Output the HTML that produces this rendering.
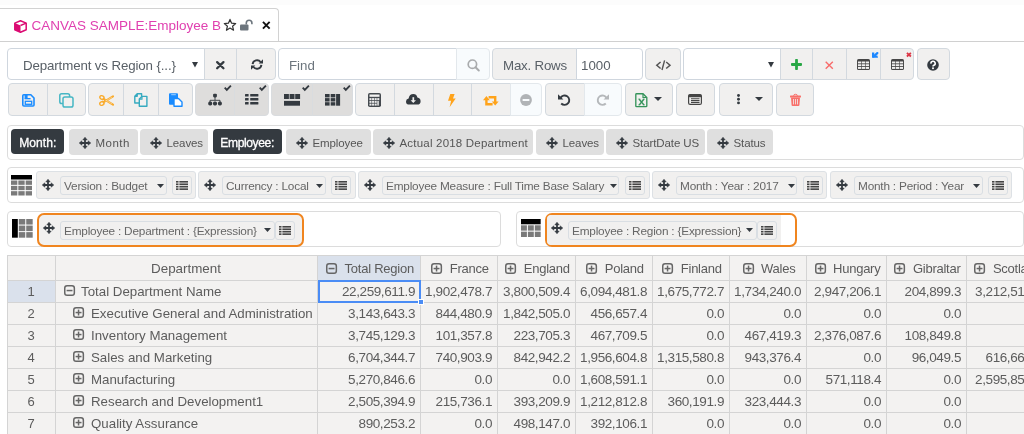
<!DOCTYPE html><html><head><meta charset="utf-8"><style>
*{box-sizing:border-box;margin:0;padding:0}
html,body{width:1024px;height:434px;overflow:hidden;background:#fff;font-family:"Liberation Sans",sans-serif;color:#495057}
.ab{position:absolute}
.btn{position:absolute;background:#f1f0ef;border:1px solid #d3d9df}
.inp{position:absolute;background:#fff;border:1px solid #cfd6de}
.t{position:absolute;white-space:nowrap}
svg{position:absolute;overflow:visible}
.zone{position:absolute;border:1px solid #dcdcdc;border-radius:4px;background:#fff}
.chip{position:absolute;background:#dfdfdf;border-radius:4px;height:26px}
.badge{position:absolute;background:#343a40;border-radius:4px;color:#fff;font-weight:bold}
.fitem{position:absolute;background:#f1f0ef;border:1px solid #dde1e5;border-radius:3px}
.fsel{position:absolute;background:#f1f0ef;border:1px solid #d9dee3;border-radius:3px;height:19px}
.flist{position:absolute;background:#f1f0ef;border:1px solid #d9dee3;border-radius:3px;height:19px;width:20px}
table{position:absolute;border-collapse:collapse;table-layout:fixed}
td{border:1px solid #d6d6d6;height:22px;white-space:nowrap;overflow:hidden;background:#f3f2f1;color:#444}
</style></head><body><div style="position:absolute;left:0;top:0;width:1024px;height:434px;overflow:hidden;will-change:transform">
<div class="ab" style="left:0;top:0;width:1024px;height:5px;background:#fcfcfc"></div>
<div class="ab" style="left:-10px;top:8px;width:289px;height:34px;border:1px solid #d2d2d2;border-bottom:none;border-radius:4px 4px 0 0;background:#fff"></div>
<div class="ab" style="left:0;top:41px;width:1024px;height:1px;background:#d0d0d0"></div>
<div class="t" style="left:31.5px;top:18px;font-size:13.5px;color:#e040b0">CANVAS SAMPLE:Employee B</div>
<div class="inp" style="left:7px;top:48px;width:198px;height:32px;border-radius:4px 0 0 4px"></div>
<div class="t" style="left:23px;top:57.5px;font-size:13.3px;color:#596067;letter-spacing:-0.12px">Department vs Region {...}</div>
<div class="btn" style="left:204px;top:48px;width:33px;height:32px;"></div>
<div class="btn" style="left:236px;top:48px;width:40px;height:32px;border-radius:0 4px 4px 0"></div>
<div class="inp" style="left:278px;top:48px;width:179px;height:32px;border-radius:4px 0 0 4px"></div>
<div class="t" style="left:289px;top:57.5px;font-size:13.3px;color:#6c757d;">Find</div>
<div class="btn" style="left:456px;top:48px;width:34px;height:32px;background:#f8fbfd;border-radius:0 4px 4px 0;border-color:#e3e8ec"></div>
<div class="btn" style="left:492px;top:48px;width:85px;height:32px;border-radius:4px 0 0 4px"></div>
<div class="t" style="left:503px;top:57.5px;font-size:13.3px;color:#596067;letter-spacing:-0.2px">Max. Rows</div>
<div class="inp" style="left:576px;top:48px;width:67px;height:32px;border-radius:0 4px 4px 0"></div>
<div class="t" style="left:581px;top:57.5px;font-size:13.3px;color:#596067;">1000</div>
<div class="btn" style="left:645px;top:48px;width:36px;height:32px;border-radius:4px"></div>
<div class="inp" style="left:683px;top:48px;width:98px;height:32px;border-radius:4px 0 0 4px"></div>
<div class="btn" style="left:780px;top:48px;width:33px;height:32px;"></div>
<div class="btn" style="left:812px;top:48px;width:35px;height:32px;"></div>
<div class="btn" style="left:846px;top:48px;width:35px;height:32px;"></div>
<div class="btn" style="left:880px;top:48px;width:34px;height:32px;border-radius:0 4px 4px 0"></div>
<div class="btn" style="left:917px;top:48px;width:33px;height:32px;border-radius:4px"></div>
<div class="btn" style="left:8px;top:83px;width:40px;height:33px;border-radius:4px 0 0 4px;"></div>
<div class="btn" style="left:47px;top:83px;width:39px;height:33px;border-radius:0 4px 4px 0;"></div>
<div class="btn" style="left:88px;top:83px;width:36px;height:33px;border-radius:4px 0 0 4px;"></div>
<div class="btn" style="left:123px;top:83px;width:36px;height:33px;;"></div>
<div class="btn" style="left:158px;top:83px;width:35px;height:33px;border-radius:0 4px 4px 0;"></div>
<div class="btn" style="left:195px;top:83px;width:40px;height:33px;border-radius:4px 0 0 4px;background:#dedddc;border-color:#d9dcdf"></div>
<div class="btn" style="left:234px;top:83px;width:35px;height:33px;border-radius:0 4px 4px 0;background:#dedddc;border-color:#d9dcdf"></div>
<div class="btn" style="left:271px;top:83px;width:42px;height:33px;border-radius:4px 0 0 4px;background:#dedddc;border-color:#d9dcdf"></div>
<div class="btn" style="left:312px;top:83px;width:41px;height:33px;border-radius:0 4px 4px 0;background:#dedddc;border-color:#d9dcdf"></div>
<div class="btn" style="left:355px;top:83px;width:40px;height:33px;border-radius:4px 0 0 4px;"></div>
<div class="btn" style="left:394px;top:83px;width:40px;height:33px;;"></div>
<div class="btn" style="left:433px;top:83px;width:39px;height:33px;;"></div>
<div class="btn" style="left:471px;top:83px;width:40px;height:33px;;"></div>
<div class="btn" style="left:510px;top:83px;width:32px;height:33px;border-radius:0 4px 4px 0;background:#f8fbfd;border-color:#e3e8ec"></div>
<div class="btn" style="left:545px;top:83px;width:40px;height:33px;border-radius:4px 0 0 4px;"></div>
<div class="btn" style="left:584px;top:83px;width:38px;height:33px;border-radius:0 4px 4px 0;background:#f8fbfd;border-color:#e3e8ec"></div>
<div class="btn" style="left:625px;top:83px;width:48px;height:33px;border-radius:4px;"></div>
<div class="btn" style="left:676px;top:83px;width:39px;height:33px;border-radius:4px;"></div>
<div class="btn" style="left:719px;top:83px;width:54px;height:33px;border-radius:4px;"></div>
<div class="btn" style="left:776px;top:83px;width:38px;height:33px;border-radius:4px;"></div>
<div class="zone" style="left:7px;top:125px;width:1017px;height:35px;"></div>
<div class="badge" style="left:11.3px;top:128.6px;width:52.7px;height:25.6px"></div>
<div class="t" style="left:19.3px;top:136.4px;font-size:12.1px;letter-spacing:0px;color:#fff;-webkit-text-stroke:0.3px #fff">Month:</div>
<div class="chip" style="left:69px;top:129px;width:69px"></div>
<div class="t" style="left:95.5px;top:136.5px;font-size:11.5px;letter-spacing:0.5px;color:#555">Month</div>
<div class="chip" style="left:140px;top:129px;width:68px"></div>
<div class="t" style="left:166.5px;top:136.5px;font-size:11.5px;letter-spacing:-0.1px;color:#555">Leaves</div>
<div class="badge" style="left:213.3px;top:128.6px;width:68.7px;height:25.6px"></div>
<div class="t" style="left:220.3px;top:136.4px;font-size:12.1px;letter-spacing:-0.4px;color:#fff;-webkit-text-stroke:0.3px #fff">Employee:</div>
<div class="chip" style="left:286px;top:129px;width:85px"></div>
<div class="t" style="left:312.5px;top:136.5px;font-size:11.5px;letter-spacing:-0.1px;color:#555">Employee</div>
<div class="chip" style="left:373px;top:129px;width:160px"></div>
<div class="t" style="left:399.5px;top:136.5px;font-size:11.5px;letter-spacing:0.2px;color:#555">Actual 2018 Department</div>
<div class="chip" style="left:536px;top:129px;width:68px"></div>
<div class="t" style="left:562.5px;top:136.5px;font-size:11.5px;letter-spacing:-0.1px;color:#555">Leaves</div>
<div class="chip" style="left:606px;top:129px;width:99px"></div>
<div class="t" style="left:632.5px;top:136.5px;font-size:11.5px;letter-spacing:-0.1px;color:#555">StartDate US</div>
<div class="chip" style="left:707px;top:129px;width:66px"></div>
<div class="t" style="left:733.5px;top:136.5px;font-size:11.5px;letter-spacing:-0.1px;color:#555">Status</div>
<div class="zone" style="left:7px;top:167px;width:1017px;height:36px;"></div>
<div class="fitem" style="left:36px;top:171px;width:160px;height:28px;"></div>
<div class="fsel" style="left:60px;top:176px;width:107px"></div>
<div class="t" style="left:64px;top:179.2px;font-size:11.8px;letter-spacing:-0.2px;color:#666">Version : Budget</div>
<div class="flist" style="left:172px;top:176px"></div>
<div class="fitem" style="left:198px;top:171px;width:158px;height:28px;"></div>
<div class="fsel" style="left:222px;top:176px;width:104px"></div>
<div class="t" style="left:226px;top:179.2px;font-size:11.8px;letter-spacing:-0.2px;color:#666">Currency : Local</div>
<div class="flist" style="left:331px;top:176px"></div>
<div class="fitem" style="left:358px;top:171px;width:292px;height:28px;"></div>
<div class="fsel" style="left:382px;top:176px;width:237px"></div>
<div class="t" style="left:386px;top:179.2px;font-size:11.8px;letter-spacing:-0.2px;color:#666">Employee Measure : Full Time Base Salary</div>
<div class="flist" style="left:625px;top:176px"></div>
<div class="fitem" style="left:652px;top:171px;width:175px;height:28px;"></div>
<div class="fsel" style="left:676px;top:176px;width:121px"></div>
<div class="t" style="left:680px;top:179.2px;font-size:11.8px;letter-spacing:-0.2px;color:#666">Month : Year : 2017</div>
<div class="flist" style="left:803px;top:176px"></div>
<div class="fitem" style="left:830px;top:171px;width:182px;height:28px;"></div>
<div class="fsel" style="left:854px;top:176px;width:129px"></div>
<div class="t" style="left:858px;top:179.2px;font-size:11.8px;letter-spacing:-0.2px;color:#666">Month : Period : Year</div>
<div class="flist" style="left:988px;top:176px"></div>
<div class="zone" style="left:7px;top:211px;width:494px;height:36px;"></div>
<div class="zone" style="left:516px;top:211px;width:508px;height:36px;"></div>
<div class="ab" style="left:37px;top:213px;width:267px;height:34px;border:2px solid #f0851f;border-radius:7px;background:#f1f0ef"></div>
<div class="fsel" style="left:60px;top:221px;width:215px"></div>
<div class="t" style="left:64px;top:223.6px;font-size:11.8px;letter-spacing:-0.2px;color:#666">Employee : Department : {Expression}</div>
<div class="flist" style="left:275px;top:221px"></div>
<div class="ab" style="left:545px;top:213px;width:252px;height:34px;border:2px solid #f0851f;border-radius:7px;background:#fff"></div>
<div class="ab" style="left:547px;top:215px;width:234px;height:30px;background:#f1f0ef;border-radius:4px 0 0 4px"></div>
<div class="fsel" style="left:568px;top:221px;width:189px"></div>
<div class="t" style="left:572px;top:223.6px;font-size:11.8px;letter-spacing:-0.2px;color:#666">Employee : Region : {Expression}</div>
<div class="flist" style="left:757px;top:221px"></div>
<div class="ab" style="left:7px;top:255px;width:1017px;height:179px;background:#f3f2f1"></div>
<div class="ab" style="left:7px;top:280px;width:48px;height:22px;background:#dae1ec"></div>
<div class="ab" style="left:317px;top:255px;width:103px;height:25px;background:#dae1ec"></div>
<div class="ab" style="left:7px;top:255px;width:1017px;height:1px;background:#d4d4d4"></div>
<div class="ab" style="left:7px;top:280px;width:1017px;height:1px;background:#d4d4d4"></div>
<div class="ab" style="left:7px;top:302px;width:1017px;height:1px;background:#d4d4d4"></div>
<div class="ab" style="left:7px;top:324px;width:1017px;height:1px;background:#d4d4d4"></div>
<div class="ab" style="left:7px;top:346px;width:1017px;height:1px;background:#d4d4d4"></div>
<div class="ab" style="left:7px;top:368px;width:1017px;height:1px;background:#d4d4d4"></div>
<div class="ab" style="left:7px;top:390px;width:1017px;height:1px;background:#d4d4d4"></div>
<div class="ab" style="left:7px;top:412px;width:1017px;height:1px;background:#d4d4d4"></div>
<div class="ab" style="left:7px;top:434px;width:1017px;height:1px;background:#d4d4d4"></div>
<div class="ab" style="left:7px;top:255px;width:1px;height:179px;background:#d4d4d4"></div>
<div class="ab" style="left:55px;top:255px;width:1px;height:179px;background:#d4d4d4"></div>
<div class="ab" style="left:317px;top:255px;width:1px;height:179px;background:#d4d4d4"></div>
<div class="ab" style="left:420px;top:255px;width:1px;height:179px;background:#d4d4d4"></div>
<div class="ab" style="left:497px;top:255px;width:1px;height:179px;background:#d4d4d4"></div>
<div class="ab" style="left:575px;top:255px;width:1px;height:179px;background:#d4d4d4"></div>
<div class="ab" style="left:652px;top:255px;width:1px;height:179px;background:#d4d4d4"></div>
<div class="ab" style="left:729px;top:255px;width:1px;height:179px;background:#d4d4d4"></div>
<div class="ab" style="left:806px;top:255px;width:1px;height:179px;background:#d4d4d4"></div>
<div class="ab" style="left:886px;top:255px;width:1px;height:179px;background:#d4d4d4"></div>
<div class="ab" style="left:966px;top:255px;width:1px;height:179px;background:#d4d4d4"></div>
<div class="t" style="left:55px;top:261px;width:262px;text-align:center;font-size:13.4px;letter-spacing:0px;color:#5c5c5c">Department</div>
<div class="t" style="left:317px;top:261px;width:103px;text-align:center;padding-left:3px;font-size:13px;letter-spacing:-0.25px;color:#5c5c5c"><span style="display:inline-block;width:11px;height:11px;margin-right:7.5px;vertical-align:-1px;position:relative"><svg style="left:0;top:0" width="11" height="11" viewBox="0 0 11 11"><rect x="0.75" y="0.75" width="9.6" height="9.6" rx="2.3" fill="none" stroke="#666" stroke-width="1.5"/><path d="M2.6 5.55 H8.5" stroke="#666" stroke-width="1.5"/></svg></span>Total Region</div>
<div class="t" style="left:420px;top:261px;width:77px;text-align:center;padding-left:3px;font-size:13px;letter-spacing:-0.25px;color:#5c5c5c"><span style="display:inline-block;width:11px;height:11px;margin-right:7.5px;vertical-align:-1px;position:relative"><svg style="left:0;top:0" width="11" height="11" viewBox="0 0 11 11"><rect x="0.75" y="0.75" width="9.6" height="9.6" rx="2.3" fill="none" stroke="#666" stroke-width="1.5"/><path d="M2.6 5.55 H8.5" stroke="#666" stroke-width="1.5"/><path d="M5.55 2.6 V8.5" stroke="#666" stroke-width="1.5"/></svg></span>France</div>
<div class="t" style="left:497px;top:261px;width:78px;text-align:center;padding-left:3px;font-size:13px;letter-spacing:-0.25px;color:#5c5c5c"><span style="display:inline-block;width:11px;height:11px;margin-right:7.5px;vertical-align:-1px;position:relative"><svg style="left:0;top:0" width="11" height="11" viewBox="0 0 11 11"><rect x="0.75" y="0.75" width="9.6" height="9.6" rx="2.3" fill="none" stroke="#666" stroke-width="1.5"/><path d="M2.6 5.55 H8.5" stroke="#666" stroke-width="1.5"/><path d="M5.55 2.6 V8.5" stroke="#666" stroke-width="1.5"/></svg></span>England</div>
<div class="t" style="left:575px;top:261px;width:77px;text-align:center;padding-left:3px;font-size:13px;letter-spacing:-0.25px;color:#5c5c5c"><span style="display:inline-block;width:11px;height:11px;margin-right:7.5px;vertical-align:-1px;position:relative"><svg style="left:0;top:0" width="11" height="11" viewBox="0 0 11 11"><rect x="0.75" y="0.75" width="9.6" height="9.6" rx="2.3" fill="none" stroke="#666" stroke-width="1.5"/><path d="M2.6 5.55 H8.5" stroke="#666" stroke-width="1.5"/><path d="M5.55 2.6 V8.5" stroke="#666" stroke-width="1.5"/></svg></span>Poland</div>
<div class="t" style="left:652px;top:261px;width:77px;text-align:center;padding-left:3px;font-size:13px;letter-spacing:-0.25px;color:#5c5c5c"><span style="display:inline-block;width:11px;height:11px;margin-right:7.5px;vertical-align:-1px;position:relative"><svg style="left:0;top:0" width="11" height="11" viewBox="0 0 11 11"><rect x="0.75" y="0.75" width="9.6" height="9.6" rx="2.3" fill="none" stroke="#666" stroke-width="1.5"/><path d="M2.6 5.55 H8.5" stroke="#666" stroke-width="1.5"/><path d="M5.55 2.6 V8.5" stroke="#666" stroke-width="1.5"/></svg></span>Finland</div>
<div class="t" style="left:729px;top:261px;width:77px;text-align:center;padding-left:3px;font-size:13px;letter-spacing:-0.25px;color:#5c5c5c"><span style="display:inline-block;width:11px;height:11px;margin-right:7.5px;vertical-align:-1px;position:relative"><svg style="left:0;top:0" width="11" height="11" viewBox="0 0 11 11"><rect x="0.75" y="0.75" width="9.6" height="9.6" rx="2.3" fill="none" stroke="#666" stroke-width="1.5"/><path d="M2.6 5.55 H8.5" stroke="#666" stroke-width="1.5"/><path d="M5.55 2.6 V8.5" stroke="#666" stroke-width="1.5"/></svg></span>Wales</div>
<div class="t" style="left:806px;top:261px;width:80px;text-align:center;padding-left:3px;font-size:13px;letter-spacing:-0.25px;color:#5c5c5c"><span style="display:inline-block;width:11px;height:11px;margin-right:7.5px;vertical-align:-1px;position:relative"><svg style="left:0;top:0" width="11" height="11" viewBox="0 0 11 11"><rect x="0.75" y="0.75" width="9.6" height="9.6" rx="2.3" fill="none" stroke="#666" stroke-width="1.5"/><path d="M2.6 5.55 H8.5" stroke="#666" stroke-width="1.5"/><path d="M5.55 2.6 V8.5" stroke="#666" stroke-width="1.5"/></svg></span>Hungary</div>
<div class="t" style="left:886px;top:261px;width:80px;text-align:center;padding-left:3px;font-size:13px;letter-spacing:-0.25px;color:#5c5c5c"><span style="display:inline-block;width:11px;height:11px;margin-right:7.5px;vertical-align:-1px;position:relative"><svg style="left:0;top:0" width="11" height="11" viewBox="0 0 11 11"><rect x="0.75" y="0.75" width="9.6" height="9.6" rx="2.3" fill="none" stroke="#666" stroke-width="1.5"/><path d="M2.6 5.55 H8.5" stroke="#666" stroke-width="1.5"/><path d="M5.55 2.6 V8.5" stroke="#666" stroke-width="1.5"/></svg></span>Gibraltar</div>
<div class="t" style="left:966px;top:261px;width:81px;text-align:center;padding-left:3px;font-size:13px;letter-spacing:-0.25px;color:#5c5c5c"><span style="display:inline-block;width:11px;height:11px;margin-right:7.5px;vertical-align:-1px;position:relative"><svg style="left:0;top:0" width="11" height="11" viewBox="0 0 11 11"><rect x="0.75" y="0.75" width="9.6" height="9.6" rx="2.3" fill="none" stroke="#666" stroke-width="1.5"/><path d="M2.6 5.55 H8.5" stroke="#666" stroke-width="1.5"/><path d="M5.55 2.6 V8.5" stroke="#666" stroke-width="1.5"/></svg></span>Scotland</div>
<div class="t" style="left:7px;top:284px;width:48px;text-align:center;font-size:13px;letter-spacing:0px;color:#5c5c5c">1</div>
<svg style="left:63.6px;top:284.8px" width="11" height="11" viewBox="0 0 11 11"><rect x="0.75" y="0.75" width="9.6" height="9.6" rx="2.3" fill="none" stroke="#666" stroke-width="1.5"/><path d="M2.6 5.55 H8.5" stroke="#666" stroke-width="1.5"/></svg>
<div class="t" style="left:81px;top:284px;font-size:13.3px;letter-spacing:0px;color:#5c5c5c">Total Department Name</div>
<div class="t" style="left:317px;top:284px;width:98px;text-align:right;font-size:13.5px;letter-spacing:-0.4px;color:#5c5c5c;overflow:visible">22,259,611.9</div>
<div class="t" style="left:420px;top:284px;width:72px;text-align:right;font-size:13.5px;letter-spacing:-0.4px;color:#5c5c5c;overflow:visible">1,902,478.7</div>
<div class="t" style="left:497px;top:284px;width:73px;text-align:right;font-size:13.5px;letter-spacing:-0.4px;color:#5c5c5c;overflow:visible">3,800,509.4</div>
<div class="t" style="left:575px;top:284px;width:72px;text-align:right;font-size:13.5px;letter-spacing:-0.4px;color:#5c5c5c;overflow:visible">6,094,481.8</div>
<div class="t" style="left:652px;top:284px;width:72px;text-align:right;font-size:13.5px;letter-spacing:-0.4px;color:#5c5c5c;overflow:visible">1,675,772.7</div>
<div class="t" style="left:729px;top:284px;width:72px;text-align:right;font-size:13.5px;letter-spacing:-0.4px;color:#5c5c5c;overflow:visible">1,734,240.0</div>
<div class="t" style="left:806px;top:284px;width:75px;text-align:right;font-size:13.5px;letter-spacing:-0.4px;color:#5c5c5c;overflow:visible">2,947,206.1</div>
<div class="t" style="left:886px;top:284px;width:75px;text-align:right;font-size:13.5px;letter-spacing:-0.4px;color:#5c5c5c;overflow:visible">204,899.3</div>
<div class="t" style="left:966px;top:284px;width:76px;text-align:right;font-size:13.5px;letter-spacing:-0.4px;color:#5c5c5c;overflow:visible">3,212,515.2</div>
<div class="t" style="left:7px;top:306px;width:48px;text-align:center;font-size:13px;letter-spacing:0px;color:#5c5c5c">2</div>
<svg style="left:73.0px;top:306.8px" width="11" height="11" viewBox="0 0 11 11"><rect x="0.75" y="0.75" width="9.6" height="9.6" rx="2.3" fill="none" stroke="#666" stroke-width="1.5"/><path d="M2.6 5.55 H8.5" stroke="#666" stroke-width="1.5"/><path d="M5.55 2.6 V8.5" stroke="#666" stroke-width="1.5"/></svg>
<div class="t" style="left:91px;top:306px;font-size:13.3px;letter-spacing:0px;color:#5c5c5c">Executive General and Administration</div>
<div class="t" style="left:317px;top:306px;width:98px;text-align:right;font-size:13.5px;letter-spacing:-0.4px;color:#5c5c5c;overflow:visible">3,143,643.3</div>
<div class="t" style="left:420px;top:306px;width:72px;text-align:right;font-size:13.5px;letter-spacing:-0.4px;color:#5c5c5c;overflow:visible">844,480.9</div>
<div class="t" style="left:497px;top:306px;width:73px;text-align:right;font-size:13.5px;letter-spacing:-0.4px;color:#5c5c5c;overflow:visible">1,842,505.0</div>
<div class="t" style="left:575px;top:306px;width:72px;text-align:right;font-size:13.5px;letter-spacing:-0.4px;color:#5c5c5c;overflow:visible">456,657.4</div>
<div class="t" style="left:652px;top:306px;width:72px;text-align:right;font-size:13.5px;letter-spacing:-0.4px;color:#5c5c5c;overflow:visible">0.0</div>
<div class="t" style="left:729px;top:306px;width:72px;text-align:right;font-size:13.5px;letter-spacing:-0.4px;color:#5c5c5c;overflow:visible">0.0</div>
<div class="t" style="left:806px;top:306px;width:75px;text-align:right;font-size:13.5px;letter-spacing:-0.4px;color:#5c5c5c;overflow:visible">0.0</div>
<div class="t" style="left:886px;top:306px;width:75px;text-align:right;font-size:13.5px;letter-spacing:-0.4px;color:#5c5c5c;overflow:visible">0.0</div>
<div class="t" style="left:966px;top:306px;width:76px;text-align:right;font-size:13.5px;letter-spacing:-0.4px;color:#5c5c5c;overflow:visible">0.0</div>
<div class="t" style="left:7px;top:328px;width:48px;text-align:center;font-size:13px;letter-spacing:0px;color:#5c5c5c">3</div>
<svg style="left:73.0px;top:328.8px" width="11" height="11" viewBox="0 0 11 11"><rect x="0.75" y="0.75" width="9.6" height="9.6" rx="2.3" fill="none" stroke="#666" stroke-width="1.5"/><path d="M2.6 5.55 H8.5" stroke="#666" stroke-width="1.5"/><path d="M5.55 2.6 V8.5" stroke="#666" stroke-width="1.5"/></svg>
<div class="t" style="left:91px;top:328px;font-size:13.3px;letter-spacing:0px;color:#5c5c5c">Inventory Management</div>
<div class="t" style="left:317px;top:328px;width:98px;text-align:right;font-size:13.5px;letter-spacing:-0.4px;color:#5c5c5c;overflow:visible">3,745,129.3</div>
<div class="t" style="left:420px;top:328px;width:72px;text-align:right;font-size:13.5px;letter-spacing:-0.4px;color:#5c5c5c;overflow:visible">101,357.8</div>
<div class="t" style="left:497px;top:328px;width:73px;text-align:right;font-size:13.5px;letter-spacing:-0.4px;color:#5c5c5c;overflow:visible">223,705.3</div>
<div class="t" style="left:575px;top:328px;width:72px;text-align:right;font-size:13.5px;letter-spacing:-0.4px;color:#5c5c5c;overflow:visible">467,709.5</div>
<div class="t" style="left:652px;top:328px;width:72px;text-align:right;font-size:13.5px;letter-spacing:-0.4px;color:#5c5c5c;overflow:visible">0.0</div>
<div class="t" style="left:729px;top:328px;width:72px;text-align:right;font-size:13.5px;letter-spacing:-0.4px;color:#5c5c5c;overflow:visible">467,419.3</div>
<div class="t" style="left:806px;top:328px;width:75px;text-align:right;font-size:13.5px;letter-spacing:-0.4px;color:#5c5c5c;overflow:visible">2,376,087.6</div>
<div class="t" style="left:886px;top:328px;width:75px;text-align:right;font-size:13.5px;letter-spacing:-0.4px;color:#5c5c5c;overflow:visible">108,849.8</div>
<div class="t" style="left:966px;top:328px;width:76px;text-align:right;font-size:13.5px;letter-spacing:-0.4px;color:#5c5c5c;overflow:visible">0.0</div>
<div class="t" style="left:7px;top:350px;width:48px;text-align:center;font-size:13px;letter-spacing:0px;color:#5c5c5c">4</div>
<svg style="left:73.0px;top:350.8px" width="11" height="11" viewBox="0 0 11 11"><rect x="0.75" y="0.75" width="9.6" height="9.6" rx="2.3" fill="none" stroke="#666" stroke-width="1.5"/><path d="M2.6 5.55 H8.5" stroke="#666" stroke-width="1.5"/><path d="M5.55 2.6 V8.5" stroke="#666" stroke-width="1.5"/></svg>
<div class="t" style="left:91px;top:350px;font-size:13.3px;letter-spacing:0px;color:#5c5c5c">Sales and Marketing</div>
<div class="t" style="left:317px;top:350px;width:98px;text-align:right;font-size:13.5px;letter-spacing:-0.4px;color:#5c5c5c;overflow:visible">6,704,344.7</div>
<div class="t" style="left:420px;top:350px;width:72px;text-align:right;font-size:13.5px;letter-spacing:-0.4px;color:#5c5c5c;overflow:visible">740,903.9</div>
<div class="t" style="left:497px;top:350px;width:73px;text-align:right;font-size:13.5px;letter-spacing:-0.4px;color:#5c5c5c;overflow:visible">842,942.2</div>
<div class="t" style="left:575px;top:350px;width:72px;text-align:right;font-size:13.5px;letter-spacing:-0.4px;color:#5c5c5c;overflow:visible">1,956,604.8</div>
<div class="t" style="left:652px;top:350px;width:72px;text-align:right;font-size:13.5px;letter-spacing:-0.4px;color:#5c5c5c;overflow:visible">1,315,580.8</div>
<div class="t" style="left:729px;top:350px;width:72px;text-align:right;font-size:13.5px;letter-spacing:-0.4px;color:#5c5c5c;overflow:visible">943,376.4</div>
<div class="t" style="left:806px;top:350px;width:75px;text-align:right;font-size:13.5px;letter-spacing:-0.4px;color:#5c5c5c;overflow:visible">0.0</div>
<div class="t" style="left:886px;top:350px;width:75px;text-align:right;font-size:13.5px;letter-spacing:-0.4px;color:#5c5c5c;overflow:visible">96,049.5</div>
<div class="t" style="left:966px;top:350px;width:76px;text-align:right;font-size:13.5px;letter-spacing:-0.4px;color:#5c5c5c;overflow:visible">616,663.2</div>
<div class="t" style="left:7px;top:372px;width:48px;text-align:center;font-size:13px;letter-spacing:0px;color:#5c5c5c">5</div>
<svg style="left:73.0px;top:372.8px" width="11" height="11" viewBox="0 0 11 11"><rect x="0.75" y="0.75" width="9.6" height="9.6" rx="2.3" fill="none" stroke="#666" stroke-width="1.5"/><path d="M2.6 5.55 H8.5" stroke="#666" stroke-width="1.5"/><path d="M5.55 2.6 V8.5" stroke="#666" stroke-width="1.5"/></svg>
<div class="t" style="left:91px;top:372px;font-size:13.3px;letter-spacing:0px;color:#5c5c5c">Manufacturing</div>
<div class="t" style="left:317px;top:372px;width:98px;text-align:right;font-size:13.5px;letter-spacing:-0.4px;color:#5c5c5c;overflow:visible">5,270,846.6</div>
<div class="t" style="left:420px;top:372px;width:72px;text-align:right;font-size:13.5px;letter-spacing:-0.4px;color:#5c5c5c;overflow:visible">0.0</div>
<div class="t" style="left:497px;top:372px;width:73px;text-align:right;font-size:13.5px;letter-spacing:-0.4px;color:#5c5c5c;overflow:visible">0.0</div>
<div class="t" style="left:575px;top:372px;width:72px;text-align:right;font-size:13.5px;letter-spacing:-0.4px;color:#5c5c5c;overflow:visible">1,608,591.1</div>
<div class="t" style="left:652px;top:372px;width:72px;text-align:right;font-size:13.5px;letter-spacing:-0.4px;color:#5c5c5c;overflow:visible">0.0</div>
<div class="t" style="left:729px;top:372px;width:72px;text-align:right;font-size:13.5px;letter-spacing:-0.4px;color:#5c5c5c;overflow:visible">0.0</div>
<div class="t" style="left:806px;top:372px;width:75px;text-align:right;font-size:13.5px;letter-spacing:-0.4px;color:#5c5c5c;overflow:visible">571,118.4</div>
<div class="t" style="left:886px;top:372px;width:75px;text-align:right;font-size:13.5px;letter-spacing:-0.4px;color:#5c5c5c;overflow:visible">0.0</div>
<div class="t" style="left:966px;top:372px;width:76px;text-align:right;font-size:13.5px;letter-spacing:-0.4px;color:#5c5c5c;overflow:visible">2,595,855.1</div>
<div class="t" style="left:7px;top:394px;width:48px;text-align:center;font-size:13px;letter-spacing:0px;color:#5c5c5c">6</div>
<svg style="left:73.0px;top:394.8px" width="11" height="11" viewBox="0 0 11 11"><rect x="0.75" y="0.75" width="9.6" height="9.6" rx="2.3" fill="none" stroke="#666" stroke-width="1.5"/><path d="M2.6 5.55 H8.5" stroke="#666" stroke-width="1.5"/><path d="M5.55 2.6 V8.5" stroke="#666" stroke-width="1.5"/></svg>
<div class="t" style="left:91px;top:394px;font-size:13.3px;letter-spacing:0px;color:#5c5c5c">Research and Development1</div>
<div class="t" style="left:317px;top:394px;width:98px;text-align:right;font-size:13.5px;letter-spacing:-0.4px;color:#5c5c5c;overflow:visible">2,505,394.9</div>
<div class="t" style="left:420px;top:394px;width:72px;text-align:right;font-size:13.5px;letter-spacing:-0.4px;color:#5c5c5c;overflow:visible">215,736.1</div>
<div class="t" style="left:497px;top:394px;width:73px;text-align:right;font-size:13.5px;letter-spacing:-0.4px;color:#5c5c5c;overflow:visible">393,209.9</div>
<div class="t" style="left:575px;top:394px;width:72px;text-align:right;font-size:13.5px;letter-spacing:-0.4px;color:#5c5c5c;overflow:visible">1,212,812.8</div>
<div class="t" style="left:652px;top:394px;width:72px;text-align:right;font-size:13.5px;letter-spacing:-0.4px;color:#5c5c5c;overflow:visible">360,191.9</div>
<div class="t" style="left:729px;top:394px;width:72px;text-align:right;font-size:13.5px;letter-spacing:-0.4px;color:#5c5c5c;overflow:visible">323,444.3</div>
<div class="t" style="left:806px;top:394px;width:75px;text-align:right;font-size:13.5px;letter-spacing:-0.4px;color:#5c5c5c;overflow:visible">0.0</div>
<div class="t" style="left:886px;top:394px;width:75px;text-align:right;font-size:13.5px;letter-spacing:-0.4px;color:#5c5c5c;overflow:visible">0.0</div>
<div class="t" style="left:966px;top:394px;width:76px;text-align:right;font-size:13.5px;letter-spacing:-0.4px;color:#5c5c5c;overflow:visible">0.0</div>
<div class="t" style="left:7px;top:416px;width:48px;text-align:center;font-size:13px;letter-spacing:0px;color:#5c5c5c">7</div>
<svg style="left:73.0px;top:416.8px" width="11" height="11" viewBox="0 0 11 11"><rect x="0.75" y="0.75" width="9.6" height="9.6" rx="2.3" fill="none" stroke="#666" stroke-width="1.5"/><path d="M2.6 5.55 H8.5" stroke="#666" stroke-width="1.5"/><path d="M5.55 2.6 V8.5" stroke="#666" stroke-width="1.5"/></svg>
<div class="t" style="left:91px;top:416px;font-size:13.3px;letter-spacing:0px;color:#5c5c5c">Quality Assurance</div>
<div class="t" style="left:317px;top:416px;width:98px;text-align:right;font-size:13.5px;letter-spacing:-0.4px;color:#5c5c5c;overflow:visible">890,253.2</div>
<div class="t" style="left:420px;top:416px;width:72px;text-align:right;font-size:13.5px;letter-spacing:-0.4px;color:#5c5c5c;overflow:visible">0.0</div>
<div class="t" style="left:497px;top:416px;width:73px;text-align:right;font-size:13.5px;letter-spacing:-0.4px;color:#5c5c5c;overflow:visible">498,147.0</div>
<div class="t" style="left:575px;top:416px;width:72px;text-align:right;font-size:13.5px;letter-spacing:-0.4px;color:#5c5c5c;overflow:visible">392,106.1</div>
<div class="t" style="left:652px;top:416px;width:72px;text-align:right;font-size:13.5px;letter-spacing:-0.4px;color:#5c5c5c;overflow:visible">0.0</div>
<div class="t" style="left:729px;top:416px;width:72px;text-align:right;font-size:13.5px;letter-spacing:-0.4px;color:#5c5c5c;overflow:visible">0.0</div>
<div class="t" style="left:806px;top:416px;width:75px;text-align:right;font-size:13.5px;letter-spacing:-0.4px;color:#5c5c5c;overflow:visible">0.0</div>
<div class="t" style="left:886px;top:416px;width:75px;text-align:right;font-size:13.5px;letter-spacing:-0.4px;color:#5c5c5c;overflow:visible">0.0</div>
<div class="t" style="left:966px;top:416px;width:76px;text-align:right;font-size:13.5px;letter-spacing:-0.4px;color:#5c5c5c;overflow:visible">0.0</div>
<div class="ab" style="left:318px;top:280px;width:103px;height:23px;border:2px solid #4a8cf5"></div>
<div class="ab" style="left:417.5px;top:299px;width:6px;height:6px;background:#4a8cf5;border:1px solid #fff"></div>
<svg style="left:14px;top:19.5px" width="13" height="13" viewBox="0 0 13 13"><path d="M6.5 0.8 L12.2 3.1 V9.8 L6.5 12.3 L0.8 9.8 V3.1 Z" fill="none" stroke="#db0a72" stroke-width="1.5" stroke-linejoin="round"/><path d="M0.8 3.1 L6.5 5.5 V12.3 L0.8 9.8 Z" fill="#db0a72"/><path d="M6.5 5.5 L12.2 3.1" stroke="#db0a72" stroke-width="1.4"/></svg>
<svg style="left:224px;top:19px" width="12" height="12" viewBox="0 0 12 12"><polygon points="6.00,0.40 7.59,4.22 11.71,4.55 8.57,7.23 9.53,11.25 6.00,9.10 2.47,11.25 3.43,7.23 0.29,4.55 4.41,4.22" fill="none" stroke="#333" stroke-width="1.2" stroke-linejoin="round"/></svg>
<svg style="left:240px;top:19.5px" width="13" height="11" viewBox="0 0 13 11"><rect x="0" y="4.5" width="8.5" height="6" rx="1" fill="#6c757d"/><path d="M6.3 4.6 V3 A2.8 2.8 0 0 1 11.9 3 V4.2" fill="none" stroke="#6c757d" stroke-width="1.6"/></svg>
<svg style="left:262px;top:21.2px" width="8.6" height="8.6" viewBox="0 0 8.6 8.6"><path d="M0.95 0.95 L7.6499999999999995 7.6499999999999995 M7.6499999999999995 0.95 L0.95 7.6499999999999995" stroke="#111" stroke-width="1.9" stroke-linecap="butt"/></svg>
<svg style="left:192px;top:61.8px" width="6" height="5.4" viewBox="0 0 6 5.4"><polygon points="0,0 6,0 3.0,5.4" fill="#343a40"/></svg>
<svg style="left:216.3px;top:61px" width="8.6" height="8.4" viewBox="0 0 8.6 8.4"><path d="M1.15 1.15 L7.449999999999999 7.25 M7.449999999999999 1.15 L1.15 7.25" stroke="#343a40" stroke-width="2.3" stroke-linecap="round"/></svg>
<svg style="left:250.7px;top:59px" width="12" height="11" viewBox="0 0 12 11"><path d="M1.6 5.2 A4.5 4.5 0 0 1 9.6 3" fill="none" stroke="#343a40" stroke-width="1.9"/><polygon points="12,0.3 12,4.6 7.7,4.6" fill="#343a40"/><path d="M10.4 5.8 A4.5 4.5 0 0 1 2.4 8" fill="none" stroke="#343a40" stroke-width="1.9"/><polygon points="0,10.7 0,6.4 4.3,6.4" fill="#343a40"/></svg>
<svg style="left:467px;top:58.8px" width="13" height="13" viewBox="0 0 13 13"><circle cx="5.4" cy="5.2" r="4.2" fill="none" stroke="#a9abad" stroke-width="1.7"/><path d="M8.5 8.3 L11.8 11.5" stroke="#a9abad" stroke-width="2" stroke-linecap="round"/></svg>
<svg style="left:656px;top:60px" width="15" height="11" viewBox="0 0 15 11"><path d="M4.6 2 L0.8 5.2 L4.6 8.5 M10.2 2 L14 5.2 L10.2 8.5" fill="none" stroke="#555" stroke-width="1.5"/><path d="M8.6 0.4 L6 10" stroke="#555" stroke-width="1.4"/></svg>
<svg style="left:767.5px;top:61.8px" width="6" height="5.4" viewBox="0 0 6 5.4"><polygon points="0,0 6,0 3.0,5.4" fill="#343a40"/></svg>
<svg style="left:790.5px;top:58.8px" width="11" height="11" viewBox="0 0 11 11"><rect x="0" y="4.1" width="11" height="2.8" rx="0.8" fill="#28a745"/><rect x="4.1" y="0" width="2.8" height="11" rx="0.8" fill="#28a745"/></svg>
<svg style="left:825px;top:60.7px" width="8.5" height="8.5" viewBox="0 0 8.5 8.5"><path d="M0.7 0.7 L7.8 7.8 M7.8 0.7 L0.7 7.8" stroke="#f86c6b" stroke-width="1.4" stroke-linecap="butt"/></svg>
<svg style="left:857px;top:58.7px" width="13" height="11" viewBox="0 0 13 11"><rect x="0" y="0" width="13" height="11" rx="1.6" fill="#464646"/><rect x="0.95" y="2.5" width="3.3" height="1.9" fill="#f1f0ef"/><rect x="4.85" y="2.5" width="3.3" height="1.9" fill="#f1f0ef"/><rect x="8.75" y="2.5" width="3.3" height="1.9" fill="#f1f0ef"/><rect x="0.95" y="5.25" width="3.3" height="1.9" fill="#f1f0ef"/><rect x="4.85" y="5.25" width="3.3" height="1.9" fill="#f1f0ef"/><rect x="8.75" y="5.25" width="3.3" height="1.9" fill="#f1f0ef"/><rect x="0.95" y="8.0" width="3.3" height="1.9" fill="#f1f0ef"/><rect x="4.85" y="8.0" width="3.3" height="1.9" fill="#f1f0ef"/><rect x="8.75" y="8.0" width="3.3" height="1.9" fill="#f1f0ef"/></svg>
<svg style="left:871.9px;top:51.8px" width="6.5" height="6" viewBox="0 0 6.5 6"><path d="M5.3 1.1 L1.6 4.5" stroke="#1e88ff" stroke-width="2.3" stroke-linecap="round"/><polygon points="0,0.6 2.3,0.6 2.3,3.5 5.4,3.5 6,5.8 0,5.8" fill="#1e88ff"/></svg>
<svg style="left:891px;top:58.7px" width="13" height="11" viewBox="0 0 13 11"><rect x="0" y="0" width="13" height="11" rx="1.6" fill="#464646"/><rect x="0.95" y="2.5" width="3.3" height="1.9" fill="#f1f0ef"/><rect x="4.85" y="2.5" width="3.3" height="1.9" fill="#f1f0ef"/><rect x="8.75" y="2.5" width="3.3" height="1.9" fill="#f1f0ef"/><rect x="0.95" y="5.25" width="3.3" height="1.9" fill="#f1f0ef"/><rect x="4.85" y="5.25" width="3.3" height="1.9" fill="#f1f0ef"/><rect x="8.75" y="5.25" width="3.3" height="1.9" fill="#f1f0ef"/><rect x="0.95" y="8.0" width="3.3" height="1.9" fill="#f1f0ef"/><rect x="4.85" y="8.0" width="3.3" height="1.9" fill="#f1f0ef"/><rect x="8.75" y="8.0" width="3.3" height="1.9" fill="#f1f0ef"/></svg>
<svg style="left:906px;top:52px" width="5.8" height="5.4" viewBox="0 0 5.8 5.4"><path d="M0.9 0.9 L4.8999999999999995 4.5 M4.8999999999999995 0.9 L0.9 4.5" stroke="#dc3545" stroke-width="1.8" stroke-linecap="butt"/></svg>
<svg style="left:927.3px;top:58.6px" width="12" height="12" viewBox="0 0 12 12"><circle cx="6" cy="6" r="5.8" fill="#343a40"/><path d="M4 4.6 A2.1 2.1 0 1 1 6.9 6.3 Q6 6.8 6 7.6" fill="none" stroke="#fff" stroke-width="1.6"/><rect x="5.1" y="8.4" width="1.8" height="1.7" fill="#fff"/></svg>
<svg style="left:21.5px;top:93.5px" width="13" height="13" viewBox="0 0 13 13"><path d="M1.8 0.8 H8.8 L12 4 V11 Q12 12 11 12 H2 Q0.8 12 0.8 11 V1.8 Q0.8 0.8 1.8 0.8 Z" fill="none" stroke="#1a8cff" stroke-width="1.6"/><rect x="2.6" y="1" width="3" height="3.6" fill="#1a8cff"/><rect x="2.6" y="4" width="6" height="1.3" fill="#1a8cff"/><rect x="3.3" y="7.3" width="6.4" height="3" fill="none" stroke="#1a8cff" stroke-width="1.3"/></svg>
<svg style="left:59.2px;top:92.5px" width="15" height="15" viewBox="0 0 15 15"><rect x="0.8" y="0.8" width="9.8" height="9.8" rx="1.8" fill="none" stroke="#46b6c4" stroke-width="1.5"/><rect x="4" y="4" width="10" height="10" rx="1.8" fill="#f1f0ef" stroke="#46b6c4" stroke-width="1.5"/></svg>
<svg style="left:98.8px;top:94.8px" width="15" height="11" viewBox="0 0 15 11"><ellipse cx="2.9" cy="2.5" rx="2.2" ry="1.75" transform="rotate(25 2.9 2.5)" fill="none" stroke="#f9ab2d" stroke-width="1.4"/><ellipse cx="2.9" cy="8.5" rx="2.2" ry="1.75" transform="rotate(-25 2.9 8.5)" fill="none" stroke="#f9ab2d" stroke-width="1.4"/><path d="M4.6 3.9 L14 9.6 M4.6 7.1 L14 1.4" stroke="#f9ab2d" stroke-width="2.2" stroke-linecap="round"/><path d="M6.5 5 L13 8.9 M6.5 6 L13 2.1" stroke="#fbe3b8" stroke-width="0.6"/></svg>
<svg style="left:134px;top:93.2px" width="14" height="14" viewBox="0 0 14 14"><path d="M3.2 0.8 H7.6 V10 H0.8 V3.2 Z M3.2 0.8 V3.2 H0.8" fill="none" stroke="#36aac0" stroke-width="1.4" stroke-linejoin="round"/><path d="M8 3.4 H12.9 V13.2 H5.3 V6.1 Z" fill="#f1f0ef" stroke="#36aac0" stroke-width="1.4" stroke-linejoin="round"/><path d="M8 3.6 V6.1 H5.4" fill="none" stroke="#36aac0" stroke-width="1.1"/></svg>
<svg style="left:168.6px;top:93px" width="14" height="14" viewBox="0 0 14 14"><rect x="0" y="0.3" width="9" height="11.5" rx="1" fill="#1a8cff"/><rect x="2.2" y="1.2" width="4.6" height="1" fill="#9fd0ff"/><path d="M5 5.5 H9.5 L13 9 V13.3 H5 Z" fill="#fff" stroke="#1a8cff" stroke-width="1.4" stroke-linejoin="round"/></svg>
<svg style="left:207.8px;top:94.2px" width="15" height="12" viewBox="0 0 15 12"><rect x="5.1" y="-0.3" width="3.8" height="3.7" rx="1.1" fill="#343a40"/><path d="M7 3 V6.3 M2 8 V6.3 H12 V8" fill="none" stroke="#343a40" stroke-width="0.9"/><rect x="0.2" y="7.6" width="4" height="3.8" rx="1.6" fill="#343a40"/><rect x="5" y="7.6" width="4" height="3.8" rx="1.6" fill="#343a40"/><rect x="9.9" y="7.6" width="4" height="3.8" rx="1.6" fill="#343a40"/></svg>
<svg style="left:224px;top:85.1px" width="7.5" height="6" viewBox="0 0 7.5 6"><path d="M0.7 2.7 L2.8 4.8 L6.9 0.7" fill="none" stroke="#343a40" stroke-width="1.9"/></svg>
<svg style="left:244.8px;top:94.3px" width="14" height="11" viewBox="0 0 14 11"><rect x="0" y="0" width="3.6" height="2.6" rx="0.5" fill="#343a40"/><rect x="5.2" y="0" width="8.2" height="2.6" rx="0.5" fill="#343a40"/><rect x="0" y="4" width="3.6" height="2.6" rx="0.5" fill="#343a40"/><rect x="5.2" y="4" width="8.2" height="2.6" rx="0.5" fill="#343a40"/><rect x="0" y="8" width="3.6" height="2.6" rx="0.5" fill="#343a40"/><rect x="5.2" y="8" width="8.2" height="2.6" rx="0.5" fill="#343a40"/></svg>
<svg style="left:258.5px;top:85.1px" width="7.5" height="6" viewBox="0 0 7.5 6"><path d="M0.7 2.7 L2.8 4.8 L6.9 0.7" fill="none" stroke="#343a40" stroke-width="1.9"/></svg>
<svg style="left:284.1px;top:94.2px" width="16" height="12" viewBox="0 0 16 12"><rect x="0.0" y="0" width="4.9" height="5" fill="#343a40"/><rect x="5.6" y="0" width="4.9" height="5" fill="#343a40"/><rect x="11.2" y="0" width="4.9" height="5" fill="#343a40"/><rect x="0" y="6.9" width="16" height="4.8" fill="#343a40"/></svg>
<svg style="left:302px;top:85.2px" width="7.5" height="6" viewBox="0 0 7.5 6"><path d="M0.7 2.7 L2.8 4.8 L6.9 0.7" fill="none" stroke="#343a40" stroke-width="1.9"/></svg>
<svg style="left:325px;top:94.2px" width="16" height="12" viewBox="0 0 16 12"><rect x="0.0" y="0.0" width="4.6" height="3.4" fill="#343a40"/><rect x="5.7" y="0.0" width="4.6" height="3.4" fill="#343a40"/><rect x="0.0" y="4.1" width="4.6" height="3.4" fill="#343a40"/><rect x="5.7" y="4.1" width="4.6" height="3.4" fill="#343a40"/><rect x="0.0" y="8.2" width="4.6" height="3.4" fill="#343a40"/><rect x="5.7" y="8.2" width="4.6" height="3.4" fill="#343a40"/><rect x="11.1" y="0" width="4" height="11.7" fill="#343a40"/></svg>
<svg style="left:342.5px;top:85.2px" width="7.5" height="6" viewBox="0 0 7.5 6"><path d="M0.7 2.7 L2.8 4.8 L6.9 0.7" fill="none" stroke="#343a40" stroke-width="1.9"/></svg>
<svg style="left:367.9px;top:92.8px" width="13" height="14" viewBox="0 0 13 14"><rect x="0" y="0" width="13" height="14" rx="1.8" fill="#454a4f"/><rect x="1.5" y="1.5" width="10" height="2.3" fill="#f4f3f2"/><rect x="1.45" y="5.10" width="2.05" height="2" fill="#ececec"/><rect x="4.05" y="5.10" width="2.05" height="2" fill="#ececec"/><rect x="6.65" y="5.10" width="2.05" height="2" fill="#ececec"/><rect x="9.25" y="5.10" width="2.05" height="2" fill="#ececec"/><rect x="1.45" y="7.85" width="2.05" height="2" fill="#ececec"/><rect x="4.05" y="7.85" width="2.05" height="2" fill="#ececec"/><rect x="6.65" y="7.85" width="2.05" height="2" fill="#ececec"/><rect x="1.45" y="10.60" width="2.05" height="2" fill="#ececec"/><rect x="4.05" y="10.60" width="2.05" height="2" fill="#ececec"/><rect x="6.65" y="10.60" width="2.05" height="2" fill="#ececec"/><rect x="9.3" y="7.9" width="1.5" height="4.7" fill="#ececec"/></svg>
<svg style="left:405.9px;top:94.2px" width="15" height="11" viewBox="0 0 15 11"><path d="M3.6 10.6 Q0 10.6 0 7.4 Q0 4.8 2.6 4.4 Q3.4 0 7.4 0 Q10.6 0 11.4 3.4 Q14.6 3.8 14.6 7.2 Q14.6 10.6 11.2 10.6 Z" fill="#343a40"/><path d="M7.3 3.2 V7.4" stroke="#f1f0ef" stroke-width="1.7"/><polygon points="4.6,6.3 10,6.3 7.3,9" fill="#f1f0ef"/></svg>
<svg style="left:447.8px;top:93.7px" width="8" height="14" viewBox="0 0 8 14"><polygon points="2.3,0 6.6,0 5,4.6 7.7,4.6 1.6,13.3 3.1,6.8 0,6.8" fill="#ffa31a"/></svg>
<svg style="left:482.7px;top:95.7px" width="16" height="10" viewBox="0 0 16 10"><polygon points="0,4.2 3.4,0 6.8,4.2" fill="#ffa31a"/><path d="M3.4 3 V8.2 H9.6" fill="none" stroke="#ffa31a" stroke-width="2.4"/><path d="M5.6 1.3 H12.2 V6" fill="none" stroke="#ffa31a" stroke-width="2.4"/><polygon points="8.8,5.4 15.6,5.4 12.2,9.6" fill="#ffa31a"/></svg>
<svg style="left:520.1px;top:94px" width="12" height="12" viewBox="0 0 12 12"><circle cx="6" cy="6" r="5.9" fill="#b0b3b6"/><rect x="2.6" y="5" width="6.8" height="2" fill="#f8fbfd"/></svg>
<svg style="left:558.4px;top:94px" width="12" height="12" viewBox="0 0 12 12"><path d="M2.4 4 A4.7 4.7 0 1 1 3.2 9.5" fill="none" stroke="#343a40" stroke-width="1.9"/><polygon points="0,0.2 0,5.6 5.4,5.6" fill="#343a40"/></svg>
<svg style="left:597.2px;top:94px" width="12" height="12" viewBox="0 0 12 12"><g transform="translate(12,0) scale(-1,1)"><path d="M2.4 4 A4.7 4.7 0 1 1 3.2 9.5" fill="none" stroke="#b5b8bb" stroke-width="1.9"/><polygon points="0,0.2 0,5.6 5.4,5.6" fill="#b5b8bb"/></g></svg>
<svg style="left:635.2px;top:92.7px" width="13" height="15" viewBox="0 0 13 15"><path d="M1.6 0.7 H8 L11.8 4.5 V13 Q11.8 13.6 11 13.6 H1.6 Q0.8 13.6 0.8 13 V1.5 Q0.8 0.7 1.6 0.7 Z" fill="none" stroke="#35935a" stroke-width="1.35"/><path d="M8 1 V4.5 H11.5" fill="none" stroke="#35935a" stroke-width="1.2"/><path d="M4.2 6.2 L8.9 11.9 M8.8 6.2 L4.3 11.9" stroke="#35935a" stroke-width="1.45"/><path d="M3.3 6.1 H5.3 M7.8 6.1 H9.8 M3.3 11.9 H5.3 M7.8 11.9 H9.8" stroke="#35935a" stroke-width="0.8"/></svg>
<svg style="left:654.4px;top:97px" width="8" height="4" viewBox="0 0 8 4"><polygon points="0,0 8,0 4.0,4" fill="#343a40"/></svg>
<svg style="left:688.3px;top:94px" width="14" height="11" viewBox="0 0 14 11"><rect x="0.6" y="0.6" width="12.8" height="9.8" rx="1.5" fill="none" stroke="#454545" stroke-width="1.2"/><rect x="0.6" y="0.6" width="12.8" height="2.6" rx="1" fill="#454545"/><path d="M3 4.7 H11.5 M3 6.6 H11.5 M3 8.5 H11.5" stroke="#454545" stroke-width="1.1"/></svg>
<svg style="left:737.1px;top:94px" width="3" height="11" viewBox="0 0 3 11"><circle cx="1.5" cy="1.5" r="1.45" fill="#343a40"/><circle cx="1.5" cy="5.2" r="1.45" fill="#343a40"/><circle cx="1.5" cy="8.9" r="1.45" fill="#343a40"/></svg>
<svg style="left:754.5px;top:97px" width="8" height="4" viewBox="0 0 8 4"><polygon points="0,0 8,0 4.0,4" fill="#343a40"/></svg>
<svg style="left:789.8px;top:94.4px" width="11" height="12" viewBox="0 0 11 12"><rect x="0" y="1.6" width="11" height="1.8" rx="0.5" fill="#f8716b"/><path d="M3.6 1.8 Q3.6 0.3 5.5 0.3 Q7.4 0.3 7.4 1.8" fill="none" stroke="#f8716b" stroke-width="1"/><path d="M1 3.4 H10 L9.4 11.2 Q9.3 12 8.5 12 H2.5 Q1.7 12 1.6 11.2 Z" fill="#f8716b"/><path d="M3.5 5 V10.4 M5.5 5 V10.4 M7.5 5 V10.4" stroke="#f1f0ef" stroke-width="0.8"/></svg>
<svg style="left:78.5px;top:137px" width="12" height="12" viewBox="0 0 12 12"><path d="M6 2 V10 M2 6 H10" stroke="#343a40" stroke-width="1.8"/><polygon points="6,0.2 8.2,2.9 3.8,2.9" fill="#343a40" stroke="#343a40" stroke-width="0.5" stroke-linejoin="round"/><polygon points="6,11.8 8.2,9.1 3.8,9.1" fill="#343a40" stroke="#343a40" stroke-width="0.5" stroke-linejoin="round"/><polygon points="0.2,6 2.9,3.8 2.9,8.2" fill="#343a40" stroke="#343a40" stroke-width="0.5" stroke-linejoin="round"/><polygon points="11.8,6 9.1,3.8 9.1,8.2" fill="#343a40" stroke="#343a40" stroke-width="0.5" stroke-linejoin="round"/></svg>
<svg style="left:149.5px;top:137px" width="12" height="12" viewBox="0 0 12 12"><path d="M6 2 V10 M2 6 H10" stroke="#343a40" stroke-width="1.8"/><polygon points="6,0.2 8.2,2.9 3.8,2.9" fill="#343a40" stroke="#343a40" stroke-width="0.5" stroke-linejoin="round"/><polygon points="6,11.8 8.2,9.1 3.8,9.1" fill="#343a40" stroke="#343a40" stroke-width="0.5" stroke-linejoin="round"/><polygon points="0.2,6 2.9,3.8 2.9,8.2" fill="#343a40" stroke="#343a40" stroke-width="0.5" stroke-linejoin="round"/><polygon points="11.8,6 9.1,3.8 9.1,8.2" fill="#343a40" stroke="#343a40" stroke-width="0.5" stroke-linejoin="round"/></svg>
<svg style="left:295.5px;top:137px" width="12" height="12" viewBox="0 0 12 12"><path d="M6 2 V10 M2 6 H10" stroke="#343a40" stroke-width="1.8"/><polygon points="6,0.2 8.2,2.9 3.8,2.9" fill="#343a40" stroke="#343a40" stroke-width="0.5" stroke-linejoin="round"/><polygon points="6,11.8 8.2,9.1 3.8,9.1" fill="#343a40" stroke="#343a40" stroke-width="0.5" stroke-linejoin="round"/><polygon points="0.2,6 2.9,3.8 2.9,8.2" fill="#343a40" stroke="#343a40" stroke-width="0.5" stroke-linejoin="round"/><polygon points="11.8,6 9.1,3.8 9.1,8.2" fill="#343a40" stroke="#343a40" stroke-width="0.5" stroke-linejoin="round"/></svg>
<svg style="left:382.5px;top:137px" width="12" height="12" viewBox="0 0 12 12"><path d="M6 2 V10 M2 6 H10" stroke="#343a40" stroke-width="1.8"/><polygon points="6,0.2 8.2,2.9 3.8,2.9" fill="#343a40" stroke="#343a40" stroke-width="0.5" stroke-linejoin="round"/><polygon points="6,11.8 8.2,9.1 3.8,9.1" fill="#343a40" stroke="#343a40" stroke-width="0.5" stroke-linejoin="round"/><polygon points="0.2,6 2.9,3.8 2.9,8.2" fill="#343a40" stroke="#343a40" stroke-width="0.5" stroke-linejoin="round"/><polygon points="11.8,6 9.1,3.8 9.1,8.2" fill="#343a40" stroke="#343a40" stroke-width="0.5" stroke-linejoin="round"/></svg>
<svg style="left:545.5px;top:137px" width="12" height="12" viewBox="0 0 12 12"><path d="M6 2 V10 M2 6 H10" stroke="#343a40" stroke-width="1.8"/><polygon points="6,0.2 8.2,2.9 3.8,2.9" fill="#343a40" stroke="#343a40" stroke-width="0.5" stroke-linejoin="round"/><polygon points="6,11.8 8.2,9.1 3.8,9.1" fill="#343a40" stroke="#343a40" stroke-width="0.5" stroke-linejoin="round"/><polygon points="0.2,6 2.9,3.8 2.9,8.2" fill="#343a40" stroke="#343a40" stroke-width="0.5" stroke-linejoin="round"/><polygon points="11.8,6 9.1,3.8 9.1,8.2" fill="#343a40" stroke="#343a40" stroke-width="0.5" stroke-linejoin="round"/></svg>
<svg style="left:615.5px;top:137px" width="12" height="12" viewBox="0 0 12 12"><path d="M6 2 V10 M2 6 H10" stroke="#343a40" stroke-width="1.8"/><polygon points="6,0.2 8.2,2.9 3.8,2.9" fill="#343a40" stroke="#343a40" stroke-width="0.5" stroke-linejoin="round"/><polygon points="6,11.8 8.2,9.1 3.8,9.1" fill="#343a40" stroke="#343a40" stroke-width="0.5" stroke-linejoin="round"/><polygon points="0.2,6 2.9,3.8 2.9,8.2" fill="#343a40" stroke="#343a40" stroke-width="0.5" stroke-linejoin="round"/><polygon points="11.8,6 9.1,3.8 9.1,8.2" fill="#343a40" stroke="#343a40" stroke-width="0.5" stroke-linejoin="round"/></svg>
<svg style="left:716.5px;top:137px" width="12" height="12" viewBox="0 0 12 12"><path d="M6 2 V10 M2 6 H10" stroke="#343a40" stroke-width="1.8"/><polygon points="6,0.2 8.2,2.9 3.8,2.9" fill="#343a40" stroke="#343a40" stroke-width="0.5" stroke-linejoin="round"/><polygon points="6,11.8 8.2,9.1 3.8,9.1" fill="#343a40" stroke="#343a40" stroke-width="0.5" stroke-linejoin="round"/><polygon points="0.2,6 2.9,3.8 2.9,8.2" fill="#343a40" stroke="#343a40" stroke-width="0.5" stroke-linejoin="round"/><polygon points="11.8,6 9.1,3.8 9.1,8.2" fill="#343a40" stroke="#343a40" stroke-width="0.5" stroke-linejoin="round"/></svg>
<svg style="left:11.1px;top:174.8px" width="21" height="20.5" viewBox="0 0 21 20.5"><rect x="0" y="0" width="21" height="4.51" fill="#000"/><rect x="0.00" y="5.51" width="6.33" height="4.33" fill="#7a7a7a"/><rect x="7.33" y="5.51" width="6.33" height="4.33" fill="#7a7a7a"/><rect x="14.67" y="5.51" width="6.33" height="4.33" fill="#7a7a7a"/><rect x="0.00" y="10.84" width="6.33" height="4.33" fill="#7a7a7a"/><rect x="7.33" y="10.84" width="6.33" height="4.33" fill="#7a7a7a"/><rect x="14.67" y="10.84" width="6.33" height="4.33" fill="#7a7a7a"/><rect x="0.00" y="16.17" width="6.33" height="4.33" fill="#7a7a7a"/><rect x="7.33" y="16.17" width="6.33" height="4.33" fill="#7a7a7a"/><rect x="14.67" y="16.17" width="6.33" height="4.33" fill="#7a7a7a"/></svg>
<svg style="left:42.2px;top:178.8px" width="12" height="12" viewBox="0 0 12 12"><path d="M6 2 V10 M2 6 H10" stroke="#343a40" stroke-width="1.8"/><polygon points="6,0.2 8.2,2.9 3.8,2.9" fill="#343a40" stroke="#343a40" stroke-width="0.5" stroke-linejoin="round"/><polygon points="6,11.8 8.2,9.1 3.8,9.1" fill="#343a40" stroke="#343a40" stroke-width="0.5" stroke-linejoin="round"/><polygon points="0.2,6 2.9,3.8 2.9,8.2" fill="#343a40" stroke="#343a40" stroke-width="0.5" stroke-linejoin="round"/><polygon points="11.8,6 9.1,3.8 9.1,8.2" fill="#343a40" stroke="#343a40" stroke-width="0.5" stroke-linejoin="round"/></svg>
<svg style="left:176px;top:181px" width="12" height="9" viewBox="0 0 12 9"><rect x="0" y="0.0" width="2.5" height="1.6" fill="#454545"/><rect x="3.4" y="0.0" width="8.6" height="1.6" fill="#454545"/><rect x="0" y="2.45" width="2.5" height="1.6" fill="#454545"/><rect x="3.4" y="2.45" width="8.6" height="1.6" fill="#454545"/><rect x="0" y="4.9" width="2.5" height="1.6" fill="#454545"/><rect x="3.4" y="4.9" width="8.6" height="1.6" fill="#454545"/><rect x="0" y="7.3500000000000005" width="2.5" height="1.6" fill="#454545"/><rect x="3.4" y="7.3500000000000005" width="8.6" height="1.6" fill="#454545"/></svg>
<svg style="left:156.5px;top:183.5px" width="7" height="4" viewBox="0 0 7 4"><polygon points="0,0 7,0 3.5,4" fill="#343a40"/></svg>
<svg style="left:204.2px;top:178.8px" width="12" height="12" viewBox="0 0 12 12"><path d="M6 2 V10 M2 6 H10" stroke="#343a40" stroke-width="1.8"/><polygon points="6,0.2 8.2,2.9 3.8,2.9" fill="#343a40" stroke="#343a40" stroke-width="0.5" stroke-linejoin="round"/><polygon points="6,11.8 8.2,9.1 3.8,9.1" fill="#343a40" stroke="#343a40" stroke-width="0.5" stroke-linejoin="round"/><polygon points="0.2,6 2.9,3.8 2.9,8.2" fill="#343a40" stroke="#343a40" stroke-width="0.5" stroke-linejoin="round"/><polygon points="11.8,6 9.1,3.8 9.1,8.2" fill="#343a40" stroke="#343a40" stroke-width="0.5" stroke-linejoin="round"/></svg>
<svg style="left:335px;top:181px" width="12" height="9" viewBox="0 0 12 9"><rect x="0" y="0.0" width="2.5" height="1.6" fill="#454545"/><rect x="3.4" y="0.0" width="8.6" height="1.6" fill="#454545"/><rect x="0" y="2.45" width="2.5" height="1.6" fill="#454545"/><rect x="3.4" y="2.45" width="8.6" height="1.6" fill="#454545"/><rect x="0" y="4.9" width="2.5" height="1.6" fill="#454545"/><rect x="3.4" y="4.9" width="8.6" height="1.6" fill="#454545"/><rect x="0" y="7.3500000000000005" width="2.5" height="1.6" fill="#454545"/><rect x="3.4" y="7.3500000000000005" width="8.6" height="1.6" fill="#454545"/></svg>
<svg style="left:315.5px;top:183.5px" width="7" height="4" viewBox="0 0 7 4"><polygon points="0,0 7,0 3.5,4" fill="#343a40"/></svg>
<svg style="left:364.2px;top:178.8px" width="12" height="12" viewBox="0 0 12 12"><path d="M6 2 V10 M2 6 H10" stroke="#343a40" stroke-width="1.8"/><polygon points="6,0.2 8.2,2.9 3.8,2.9" fill="#343a40" stroke="#343a40" stroke-width="0.5" stroke-linejoin="round"/><polygon points="6,11.8 8.2,9.1 3.8,9.1" fill="#343a40" stroke="#343a40" stroke-width="0.5" stroke-linejoin="round"/><polygon points="0.2,6 2.9,3.8 2.9,8.2" fill="#343a40" stroke="#343a40" stroke-width="0.5" stroke-linejoin="round"/><polygon points="11.8,6 9.1,3.8 9.1,8.2" fill="#343a40" stroke="#343a40" stroke-width="0.5" stroke-linejoin="round"/></svg>
<svg style="left:629px;top:181px" width="12" height="9" viewBox="0 0 12 9"><rect x="0" y="0.0" width="2.5" height="1.6" fill="#454545"/><rect x="3.4" y="0.0" width="8.6" height="1.6" fill="#454545"/><rect x="0" y="2.45" width="2.5" height="1.6" fill="#454545"/><rect x="3.4" y="2.45" width="8.6" height="1.6" fill="#454545"/><rect x="0" y="4.9" width="2.5" height="1.6" fill="#454545"/><rect x="3.4" y="4.9" width="8.6" height="1.6" fill="#454545"/><rect x="0" y="7.3500000000000005" width="2.5" height="1.6" fill="#454545"/><rect x="3.4" y="7.3500000000000005" width="8.6" height="1.6" fill="#454545"/></svg>
<svg style="left:609.5px;top:183.5px" width="7" height="4" viewBox="0 0 7 4"><polygon points="0,0 7,0 3.5,4" fill="#343a40"/></svg>
<svg style="left:658.2px;top:178.8px" width="12" height="12" viewBox="0 0 12 12"><path d="M6 2 V10 M2 6 H10" stroke="#343a40" stroke-width="1.8"/><polygon points="6,0.2 8.2,2.9 3.8,2.9" fill="#343a40" stroke="#343a40" stroke-width="0.5" stroke-linejoin="round"/><polygon points="6,11.8 8.2,9.1 3.8,9.1" fill="#343a40" stroke="#343a40" stroke-width="0.5" stroke-linejoin="round"/><polygon points="0.2,6 2.9,3.8 2.9,8.2" fill="#343a40" stroke="#343a40" stroke-width="0.5" stroke-linejoin="round"/><polygon points="11.8,6 9.1,3.8 9.1,8.2" fill="#343a40" stroke="#343a40" stroke-width="0.5" stroke-linejoin="round"/></svg>
<svg style="left:807px;top:181px" width="12" height="9" viewBox="0 0 12 9"><rect x="0" y="0.0" width="2.5" height="1.6" fill="#454545"/><rect x="3.4" y="0.0" width="8.6" height="1.6" fill="#454545"/><rect x="0" y="2.45" width="2.5" height="1.6" fill="#454545"/><rect x="3.4" y="2.45" width="8.6" height="1.6" fill="#454545"/><rect x="0" y="4.9" width="2.5" height="1.6" fill="#454545"/><rect x="3.4" y="4.9" width="8.6" height="1.6" fill="#454545"/><rect x="0" y="7.3500000000000005" width="2.5" height="1.6" fill="#454545"/><rect x="3.4" y="7.3500000000000005" width="8.6" height="1.6" fill="#454545"/></svg>
<svg style="left:787.5px;top:183.5px" width="7" height="4" viewBox="0 0 7 4"><polygon points="0,0 7,0 3.5,4" fill="#343a40"/></svg>
<svg style="left:836.2px;top:178.8px" width="12" height="12" viewBox="0 0 12 12"><path d="M6 2 V10 M2 6 H10" stroke="#343a40" stroke-width="1.8"/><polygon points="6,0.2 8.2,2.9 3.8,2.9" fill="#343a40" stroke="#343a40" stroke-width="0.5" stroke-linejoin="round"/><polygon points="6,11.8 8.2,9.1 3.8,9.1" fill="#343a40" stroke="#343a40" stroke-width="0.5" stroke-linejoin="round"/><polygon points="0.2,6 2.9,3.8 2.9,8.2" fill="#343a40" stroke="#343a40" stroke-width="0.5" stroke-linejoin="round"/><polygon points="11.8,6 9.1,3.8 9.1,8.2" fill="#343a40" stroke="#343a40" stroke-width="0.5" stroke-linejoin="round"/></svg>
<svg style="left:992px;top:181px" width="12" height="9" viewBox="0 0 12 9"><rect x="0" y="0.0" width="2.5" height="1.6" fill="#454545"/><rect x="3.4" y="0.0" width="8.6" height="1.6" fill="#454545"/><rect x="0" y="2.45" width="2.5" height="1.6" fill="#454545"/><rect x="3.4" y="2.45" width="8.6" height="1.6" fill="#454545"/><rect x="0" y="4.9" width="2.5" height="1.6" fill="#454545"/><rect x="3.4" y="4.9" width="8.6" height="1.6" fill="#454545"/><rect x="0" y="7.3500000000000005" width="2.5" height="1.6" fill="#454545"/><rect x="3.4" y="7.3500000000000005" width="8.6" height="1.6" fill="#454545"/></svg>
<svg style="left:972.5px;top:183.5px" width="7" height="4" viewBox="0 0 7 4"><polygon points="0,0 7,0 3.5,4" fill="#343a40"/></svg>
<svg style="left:11.5px;top:218.8px" width="20.7" height="18.7" viewBox="0 0 20.7 18.7"><rect x="0" y="0" width="5.8" height="18.7" fill="#000"/><rect x="6.80" y="0.00" width="6.45" height="5.57" fill="#7a7a7a"/><rect x="14.25" y="0.00" width="6.45" height="5.57" fill="#7a7a7a"/><rect x="6.80" y="6.57" width="6.45" height="5.57" fill="#7a7a7a"/><rect x="14.25" y="6.57" width="6.45" height="5.57" fill="#7a7a7a"/><rect x="6.80" y="13.13" width="6.45" height="5.57" fill="#7a7a7a"/><rect x="14.25" y="13.13" width="6.45" height="5.57" fill="#7a7a7a"/></svg>
<svg style="left:42.5px;top:222px" width="12" height="12" viewBox="0 0 12 12"><path d="M6 2 V10 M2 6 H10" stroke="#343a40" stroke-width="1.8"/><polygon points="6,0.2 8.2,2.9 3.8,2.9" fill="#343a40" stroke="#343a40" stroke-width="0.5" stroke-linejoin="round"/><polygon points="6,11.8 8.2,9.1 3.8,9.1" fill="#343a40" stroke="#343a40" stroke-width="0.5" stroke-linejoin="round"/><polygon points="0.2,6 2.9,3.8 2.9,8.2" fill="#343a40" stroke="#343a40" stroke-width="0.5" stroke-linejoin="round"/><polygon points="11.8,6 9.1,3.8 9.1,8.2" fill="#343a40" stroke="#343a40" stroke-width="0.5" stroke-linejoin="round"/></svg>
<svg style="left:264px;top:227.5px" width="7" height="4" viewBox="0 0 7 4"><polygon points="0,0 7,0 3.5,4" fill="#343a40"/></svg>
<svg style="left:279px;top:226px" width="12" height="9" viewBox="0 0 12 9"><rect x="0" y="0.0" width="2.5" height="1.6" fill="#454545"/><rect x="3.4" y="0.0" width="8.6" height="1.6" fill="#454545"/><rect x="0" y="2.45" width="2.5" height="1.6" fill="#454545"/><rect x="3.4" y="2.45" width="8.6" height="1.6" fill="#454545"/><rect x="0" y="4.9" width="2.5" height="1.6" fill="#454545"/><rect x="3.4" y="4.9" width="8.6" height="1.6" fill="#454545"/><rect x="0" y="7.3500000000000005" width="2.5" height="1.6" fill="#454545"/><rect x="3.4" y="7.3500000000000005" width="8.6" height="1.6" fill="#454545"/></svg>
<svg style="left:520.5px;top:219.2px" width="19.7" height="18" viewBox="0 0 19.7 18"><rect x="0" y="0" width="19.7" height="5.3" fill="#000"/><rect x="0.00" y="6.30" width="5.90" height="5.35" fill="#7a7a7a"/><rect x="6.90" y="6.30" width="5.90" height="5.35" fill="#7a7a7a"/><rect x="13.80" y="6.30" width="5.90" height="5.35" fill="#7a7a7a"/><rect x="0.00" y="12.65" width="5.90" height="5.35" fill="#7a7a7a"/><rect x="6.90" y="12.65" width="5.90" height="5.35" fill="#7a7a7a"/><rect x="13.80" y="12.65" width="5.90" height="5.35" fill="#7a7a7a"/></svg>
<svg style="left:550.5px;top:222px" width="12" height="12" viewBox="0 0 12 12"><path d="M6 2 V10 M2 6 H10" stroke="#343a40" stroke-width="1.8"/><polygon points="6,0.2 8.2,2.9 3.8,2.9" fill="#343a40" stroke="#343a40" stroke-width="0.5" stroke-linejoin="round"/><polygon points="6,11.8 8.2,9.1 3.8,9.1" fill="#343a40" stroke="#343a40" stroke-width="0.5" stroke-linejoin="round"/><polygon points="0.2,6 2.9,3.8 2.9,8.2" fill="#343a40" stroke="#343a40" stroke-width="0.5" stroke-linejoin="round"/><polygon points="11.8,6 9.1,3.8 9.1,8.2" fill="#343a40" stroke="#343a40" stroke-width="0.5" stroke-linejoin="round"/></svg>
<svg style="left:746px;top:227.5px" width="7" height="4" viewBox="0 0 7 4"><polygon points="0,0 7,0 3.5,4" fill="#343a40"/></svg>
<svg style="left:761px;top:226px" width="12" height="9" viewBox="0 0 12 9"><rect x="0" y="0.0" width="2.5" height="1.6" fill="#454545"/><rect x="3.4" y="0.0" width="8.6" height="1.6" fill="#454545"/><rect x="0" y="2.45" width="2.5" height="1.6" fill="#454545"/><rect x="3.4" y="2.45" width="8.6" height="1.6" fill="#454545"/><rect x="0" y="4.9" width="2.5" height="1.6" fill="#454545"/><rect x="3.4" y="4.9" width="8.6" height="1.6" fill="#454545"/><rect x="0" y="7.3500000000000005" width="2.5" height="1.6" fill="#454545"/><rect x="3.4" y="7.3500000000000005" width="8.6" height="1.6" fill="#454545"/></svg>
</div></body></html>
